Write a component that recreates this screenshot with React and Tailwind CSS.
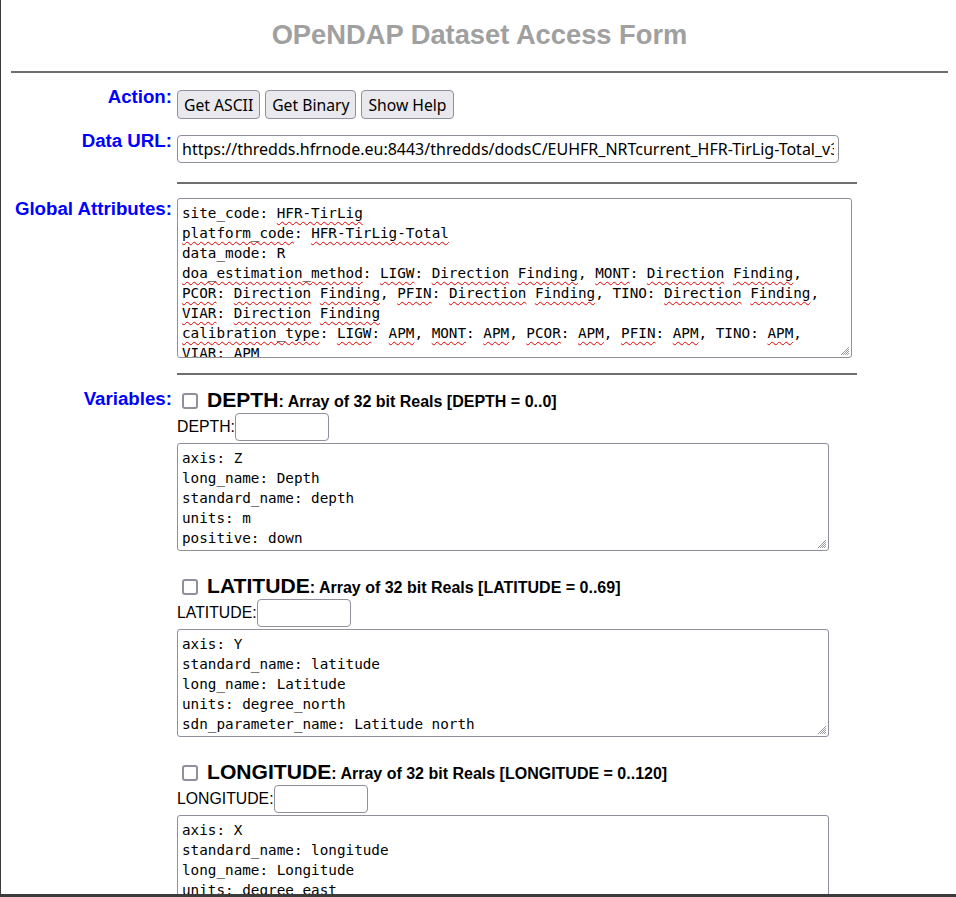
import React from "react";

const W = ({ children }) => (
  <span className="underline decoration-wavy decoration-[#e00000] decoration-1 underline-offset-[3px]">
    {children}
  </span>
);

const Grip = () => (
  <svg
    className="absolute right-[1px] bottom-[1px]"
    width="11"
    height="11"
    viewBox="0 0 11 11"
  >
    <path d="M10 2 L2 10 M10 4 L4 10 M10 6 L6 10 M10 8 L8 10" stroke="#8f8f9d" strokeWidth="0.9" fill="none" />
  </svg>
);

const Area = ({ className, children }) => (
  <div
    className={
      "relative overflow-hidden border border-[#8f8f9d] rounded-[3px] bg-white px-[4px] pt-[4px] font-['DejaVu_Sans_Mono',monospace] text-[14.3px] leading-[20px] whitespace-pre text-black " +
      className
    }
  >
    {children}
    <Grip />
  </div>
);

const labelCls =
  "w-[161px] shrink-0 text-right text-[18.7px] leading-[21px] font-bold text-[#0000ff]";

const btnCls =
  "h-[29px] px-[6px] border border-[#8f8f9d] rounded-[4px] bg-[#e9e9ed] font-['Noto_Sans',sans-serif] text-[15.7px] leading-[20px] text-black";

function Variable({ name, range, lines, first }) {
  return (
    <div className={first ? "" : "mt-[24px]"}>
      <div className="flex items-center h-[24px]">
        <input
          type="checkbox"
          className="appearance-none shrink-0 ml-[5px] w-[16px] h-[16px] border-2 border-[#8f8f9d] rounded-[3px] bg-white"
        />
        <span className="ml-[9px] leading-[24px] font-bold whitespace-nowrap">
          <span className="text-[21.1px]">{name}</span>
          <span className="text-[16px]">
            : Array of 32 bit Reals [{name} = {range}]
          </span>
        </span>
      </div>
      <div className="flex items-center h-[28px]">
        <span className="text-[15.8px] leading-[18px]">{name}:</span>
        <input
          type="text"
          className="w-[94px] h-[28px] border border-[#8f8f9d] rounded-[4px] bg-white"
        />
      </div>
      <Area className="mt-[2px] h-[108px] w-[652px]">{lines.join("\n")}</Area>
    </div>
  );
}

export default function App() {
  return (
    <div className="w-[956px] h-[897px] overflow-hidden border-l border-b-[3px] border-[#3c3c3c] bg-white font-['Liberation_Sans',Arial,sans-serif] text-black">
      <div className="pl-[10px] pr-[8px]">
        <h1 className="pt-[19px] h-[50px] text-center text-[27.3px] leading-[31px] font-bold text-[#a0a0a0]">
          OPeNDAP Dataset Access Form
        </h1>
        <div className="mt-[21px] h-[2px] bg-[#6e6e6e]" />

        {/* Action */}
        <div className="flex mt-[13px]">
          <div className={labelCls}>Action:</div>
          <div className="ml-[5px] pt-[4px] flex gap-[5px]">
            <button className={btnCls}>Get ASCII</button>
            <button className={btnCls}>Get Binary</button>
            <button className={btnCls}>Show Help</button>
          </div>
        </div>

        {/* Data URL */}
        <div className="flex mt-[11px]">
          <div className={labelCls}>Data URL:</div>
          <div className="ml-[5px] pt-[5px]">
            <input
              type="text"
              readOnly
              defaultValue="https://thredds.hfrnode.eu:8443/thredds/dodsC/EUHFR_NRTcurrent_HFR-TirLig-Total_v3.nc"
              className="w-[662px] h-[28px] px-[4px] border border-[#8f8f9d] rounded-[4px] bg-white font-['Noto_Sans',sans-serif] text-[16px] text-black"
            />
          </div>
        </div>

        {/* hr */}
        <div className="flex mt-[19px]">
          <div className="w-[161px] shrink-0" />
          <div className="ml-[5px] w-[680px] h-[2px] bg-[#6e6e6e]" />
        </div>

        {/* Global attributes */}
        <div className="flex mt-[14px]">
          <div className={labelCls}>Global Attributes:</div>
          <div className="ml-[5px]">
            <Area className="h-[160px] w-[675px]">
              {"site_code: "}<W>HFR-TirLig</W>{"\n"}
              <W>platform_code</W>{": "}<W>HFR-TirLig-Total</W>{"\n"}
              {"data_mode: R\n"}
              <W>doa_estimation_method</W>{": "}<W>LIGW</W>{": "}<W>Direction</W>{" "}<W>Finding</W>{", "}<W>MONT</W>{": "}<W>Direction</W>{" "}<W>Finding</W>{",\n"}
              <W>PCOR</W>{": "}<W>Direction</W>{" "}<W>Finding</W>{", "}<W>PFIN</W>{": "}<W>Direction</W>{" "}<W>Finding</W>{", TINO: "}<W>Direction</W>{" "}<W>Finding</W>{",\n"}
              <W>VIAR</W>{": "}<W>Direction</W>{" "}<W>Finding</W>{"\n"}
              <W>calibration_type</W>{": "}<W>LIGW</W>{": "}<W>APM</W>{", "}<W>MONT</W>{": "}<W>APM</W>{", "}<W>PCOR</W>{": "}<W>APM</W>{", "}<W>PFIN</W>{": "}<W>APM</W>{", TINO: "}<W>APM</W>{",\n"}
              <W>VIAR</W>{": "}<W>APM</W>{"\n"}
              {"calibration_link: info@hfrnode.eu\n"}
              {"title: Near Real Time Surface Ocean Total Velocity"}
            </Area>
          </div>
        </div>

        {/* hr */}
        <div className="flex mt-[15px]">
          <div className="w-[161px] shrink-0" />
          <div className="ml-[5px] w-[680px] h-[2px] bg-[#6e6e6e]" />
        </div>

        {/* Variables */}
        <div className="flex mt-[13px]">
          <div className={labelCls}>Variables:</div>
          <div className="ml-[5px] pt-[1px]">
            <Variable
              first
              name="DEPTH"
              range="0..0"
              lines={[
                "axis: Z",
                "long_name: Depth",
                "standard_name: depth",
                "units: m",
                "positive: down",
                "reference: sea_level",
              ]}
            />
            <Variable
              name="LATITUDE"
              range="0..69"
              lines={[
                "axis: Y",
                "standard_name: latitude",
                "long_name: Latitude",
                "units: degree_north",
                "sdn_parameter_name: Latitude north",
                "sdn_parameter_urn: SDN:P01::ALATZZ01",
              ]}
            />
            <Variable
              name="LONGITUDE"
              range="0..120"
              lines={[
                "axis: X",
                "standard_name: longitude",
                "long_name: Longitude",
                "units: degree_east",
                "sdn_parameter_name: Longitude east",
                "sdn_parameter_urn: SDN:P01::ALONZZ01",
              ]}
            />
          </div>
        </div>
      </div>
    </div>
  );
}
